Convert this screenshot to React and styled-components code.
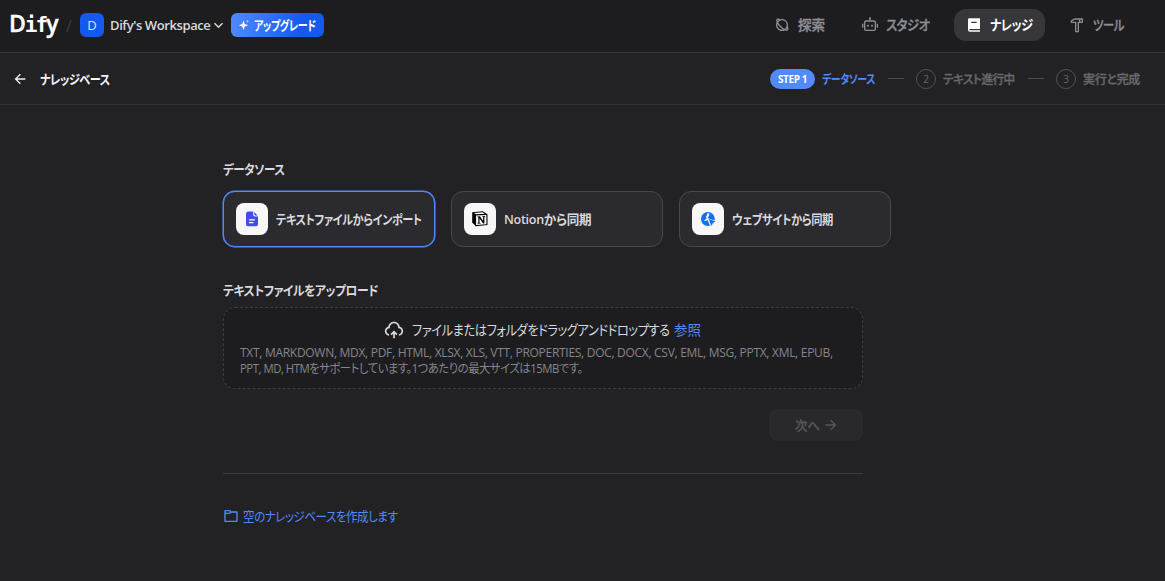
import React from 'react'
import styled, { createGlobalStyle } from 'styled-components'
import {
  RiArrowDownSLine,
  RiArrowLeftLine,
  RiArrowRightLine,
  RiBook2Fill,
  RiFolder6Line,
  RiHammerLine,
  RiPlanetLine,
  RiRobot2Line,
  RiUploadCloud2Line,
} from 'react-icons/ri'

const GlobalStyle = createGlobalStyle`
  * {
    box-sizing: border-box;
  }

  body {
    margin: 0;
    background: #222225;
    color: #d9d9de;
    font-family: "Open Sans", "Noto Sans CJK JP", sans-serif;
    font-size: 13px;
    font-feature-settings: "palt";
    overflow: hidden;
  }
`

const Page = styled.div`
  height: 100vh;
  display: flex;
  flex-direction: column;
`

/* $width is the laid out width, $squeeze condenses the kana inside it */
const LabelBox = styled.span`
  display: block;
  flex-shrink: 0;
  width: ${({ $width }) => ($width ? `${$width}px` : 'auto')};
  font-size: ${({ $size }) => $size || 13}px;
  font-weight: ${({ $weight }) => $weight || 500};
  letter-spacing: ${({ $track = -0.5 }) => $track}px;
  line-height: ${({ $line }) => $line || 20}px;
  text-align: left;
  white-space: nowrap;
  /* the CJK face has no medium, a thin stroke stands in for it */
  -webkit-text-stroke: ${({ $weight }) => ($weight ? 0 : 0.35)}px currentColor;
`

const LabelText = styled.span`
  display: inline-block;
  transform: scaleX(${({ $squeeze }) => $squeeze || 1});
  transform-origin: left center;
`

function Label({ children, $squeeze, ...rest }) {
  return (
    <LabelBox {...rest}>
      <LabelText $squeeze={$squeeze}>{children}</LabelText>
    </LabelBox>
  )
}

const Header = styled.header`
  height: 53px;
  flex-shrink: 0;
  display: flex;
  justify-content: space-between;
  align-items: flex-start;
  padding: 9px 29px 0 9px;
  background: #1d1d20;
  border-bottom: 1px solid #38383b;
`

const Brand = styled.div`
  height: 32px;
  display: flex;
  align-items: center;
`

const Logo = styled.div`
  width: 49px;
  height: 32px;
  color: #fff;
  font: 600 23px/28px "Open Sans", sans-serif;
  letter-spacing: -1px;
  white-space: nowrap;
  -webkit-text-stroke: 0.4px #fff;
`

const LogoMono = styled.span`
  font: 700 21px/28px "DejaVu Sans Mono", monospace;
  letter-spacing: -2px;
  -webkit-text-stroke: 0;
`

const Slash = styled.span`
  width: 22px;
  text-align: center;
  color: #47474b;
  font-size: 17px;
  font-weight: 300;
`

const Avatar = styled.div`
  width: 24px;
  height: 24px;
  border-radius: 6px;
  background: #155aef;
  color: #d5e2ff;
  font-size: 13px;
  line-height: 24px;
  text-align: center;
`

const Workspace = styled.button`
  display: flex;
  align-items: center;
  width: 115px;
  height: 24px;
  margin: 0 6px;
  padding: 0;
  border: 0;
  background: none;
  color: #d9d9de;
  font: inherit;

  svg {
    flex-shrink: 0;
    margin-left: auto;
    margin-right: -2px;
  }
`

const Upgrade = styled.button`
  display: flex;
  align-items: center;
  gap: 4px;
  width: 93px;
  height: 24px;
  padding: 0 0 0 7px;
  border: 0;
  border-radius: 6px;
  background: linear-gradient(95deg, #5289ff 0%, #155aef 75%);
  color: #fff;
  font: inherit;

  svg {
    flex-shrink: 0;
  }
`

const Nav = styled.nav`
  display: flex;
  gap: 12px;
`

const NavItem = styled.a`
  width: ${({ $width }) => $width}px;
  height: 32px;
  display: flex;
  align-items: center;
  gap: 8px;
  padding-left: 12px;
  border-radius: 12px;
  background: ${({ $active }) => ($active ? '#37373b' : 'transparent')};
  color: ${({ $active }) => ($active ? '#fff' : '#8d8d93')};

  svg {
    flex-shrink: 0;
  }
`

const SubHeader = styled.div`
  height: 52px;
  flex-shrink: 0;
  display: flex;
  align-items: center;
  justify-content: space-between;
  padding: 0 24px 0 12px;
  border-bottom: 1px solid #343437;
`

const Back = styled.a`
  display: flex;
  align-items: center;
  gap: 12px;
  color: #f4f4f6;
`

const Steps = styled.div`
  display: flex;
  align-items: center;
  color: #67676d;
`

const StepPill = styled.span`
  width: 45px;
  height: 20px;
  margin-right: 7px;
  border-radius: 10px;
  background: #5289ff;
  color: #fff;
  font-size: 10px;
  font-weight: 700;
  line-height: 20px;
  letter-spacing: -0.4px;
  text-align: center;
`

const StepNumber = styled.span`
  width: 20px;
  height: 20px;
  margin-right: 7px;
  border: 1px solid #515156;
  border-radius: 50%;
  font-size: 10px;
  line-height: 18px;
  text-align: center;
`

const StepLabel = styled.span`
  padding-top: 2px;
  color: ${({ $active }) => ($active ? '#5289ff' : 'inherit')};
`

const StepLine = styled.span`
  width: 16px;
  height: 1px;
  margin: 0 12px;
  background: #4b4b50;
`

const Main = styled.main`
  width: 668px;
  margin: 54px 0 0 223px;
`

const Heading = styled.h2`
  height: 20px;
  margin: 0;
  font: inherit;
`

const Sources = styled.div`
  display: flex;
  gap: 16px;
  margin-top: 12px;
`

const SourceCard = styled.button`
  width: 212px;
  height: 56px;
  display: flex;
  align-items: center;
  gap: 8px;
  padding: 0 12px;
  border: 1px solid ${({ $active }) => ($active ? '#5289ff' : '#48484c')};
  border-radius: 12px;
  box-shadow: ${({ $active }) => ($active ? '0 0 0 0.5px #5289ff' : 'none')};
  background: #2b2b2f;
  color: #d9d9de;
  font: inherit;
`

const SourceIcon = styled.span`
  width: 32px;
  height: 32px;
  flex-shrink: 0;
  display: flex;
  align-items: center;
  justify-content: center;
  border-radius: 8px;
  background: #f7f7f8;
`

const Uploader = styled.section`
  width: 640px;
  margin-top: 33px;
`

const DropZone = styled.div`
  height: 82px;
  margin-top: 7px;
  padding: 12px 16px;
  border: 1px dashed #3d3d41;
  border-radius: 12px;
  background: #1d1d20;
`

const DropTitle = styled.div`
  height: 20px;
  display: flex;
  align-items: center;
  justify-content: center;
  padding-right: 2px;

  svg {
    margin-right: 8px;
  }
`

const Browse = styled.a`
  margin-left: 4px;
  color: #5289ff;
`

const Hint = styled.div`
  margin-top: 5px;
  color: #85858c;
`

const Actions = styled.div`
  display: flex;
  justify-content: flex-end;
  padding: 20px 0 32px;
  border-bottom: 1px solid #3c3c3f;
`

const NextButton = styled.button`
  width: 94px;
  height: 32px;
  display: flex;
  align-items: center;
  justify-content: center;
  gap: 4px;
  padding: 0 0 0 2px;
  border: 0;
  border-radius: 8px;
  background: #29292c;
  color: #55555a;
  font: inherit;
`

const CreateEmpty = styled.a`
  display: flex;
  align-items: center;
  gap: 4px;
  margin-top: 32px;
  color: #5289ff;
`

function SparkleIcon() {
  return (
    <svg width="12" height="12" viewBox="0 0 12 12" fill="#fff">
      <path d="M5.500 1.500 6.700 5 10.200 6.300 6.700 7.600 5.500 11 4.300 7.600.8 6.300 4.300 5z" />
      <path d="M9.400 1v2.400M8.200 2.200h2.400" stroke="#fff" strokeWidth=".6" opacity=".7" />
    </svg>
  )
}

function FileIcon() {
  return (
    <svg width="14" height="16" viewBox="0 0 14 16">
      <path fill="#444ce7" d="M3.500.5h4.700v3.300c0 1 .6 1.700 1.700 1.700h3.100v7.400c0 1.500-1 2.400-2.400 2.400H3.400C1.900 15.300 1 14.400 1 12.900V2.900C1 1.400 1.900.5 3.500.5Z" />
      <path fill="#444ce7" d="M9.300 1l3.300 3.400h-2.500c-.5 0-.8-.3-.8-.8z" />
      <path stroke="#fff" strokeWidth="1.300" strokeLinecap="round" d="M4.500 8.800h5M4.500 11.700h3.400" />
    </svg>
  )
}

function NotionIcon() {
  return (
    <svg width="18" height="18" viewBox="0 0 18 18">
      <path fill="#000" d="M1.200 2.300 11.700 1.300 16.500 4.200V15.100L4.800 16.300 1.200 12.500z" />
      <path fill="#fff" d="M3 2.900 11.400 2.200 14 3.700 5.100 4.300zM5.100 5.500 15.400 4.900V14.200L5.100 14.900z" />
      <path fill="#000" d="M6.300 6.500 9 6.300 12.100 11V7l-1-.2v-.6l3.200-.2v.6l-.9.3v6.500l-1.400.1-3.500-5.300v4.500l1.200.2v.6l-3.200.2v-.6l.8-.3V7.200l-1-.1z" />
    </svg>
  )
}

function WebIcon() {
  return (
    <svg width="16" height="16" viewBox="0 0 16 16">
      <circle cx="7.900" cy="8" r="6.900" fill="#1570ef" />
      <path fill="#f7f7f8" d="M7.200 2.200 9.300 2.600 9 5.200 7.900 5.800 8.300 7.400 15.300 9.700 13.400 11.300 11 15.200 9.300 13.300 7.600 8.900 5 10.300 4.200 9.500 6.600 7.600 6 5.300 7 4.200z" />
      <path fill="#1570ef" d="m8.700 8 6.800 2.600-2.900 1.300-1.300 3z" />
    </svg>
  )
}

const navItems = [
  { text: '探索', icon: RiPlanetLine, width: 76, squeeze: 0.97, track: 0 },
  { text: 'スタジオ', icon: RiRobot2Line, width: 92, squeeze: 0.88 },
  { text: 'ナレッジ', icon: RiBook2Fill, width: 91, squeeze: 0.86, active: true },
  { text: 'ツール', icon: RiHammerLine, width: 79, squeeze: 0.81 },
]

const sources = [
  { text: 'テキストファイルからインポート', icon: FileIcon, squeeze: 0.86, active: true },
  { text: 'Notionから同期', icon: NotionIcon, squeeze: 0.965, track: -0.3 },
  { text: 'ウェブサイトから同期', icon: WebIcon, squeeze: 0.87 },
]

export default function App() {
  return (
    <Page>
      <GlobalStyle />
      <Header>
        <Brand>
          <Logo>D<LogoMono>if</LogoMono>y</Logo>
          <Slash>/</Slash>
          <Avatar>D</Avatar>
          <Workspace>
            <Label $weight={600} $track={-0.4}>Dify's Workspace</Label>
            <RiArrowDownSLine size={17} />
          </Workspace>
          <Upgrade>
            <SparkleIcon />
            <Label $width={62} $weight={700} $squeeze={0.77}>アップグレード</Label>
          </Upgrade>
        </Brand>
        <Nav>
          {navItems.map(({ text, icon: Icon, width, squeeze, track, active }) => (
            <NavItem key={text} $width={width} $active={active}>
              <Icon size={16} />
              <Label $size={14} $weight={active ? 700 : undefined} $squeeze={squeeze} $track={track} $width={width - 48}>
                {text}
              </Label>
            </NavItem>
          ))}
        </Nav>
      </Header>

      <SubHeader>
        <Back>
          <RiArrowLeftLine size={16} />
          <Label $weight={700} $squeeze={0.86}>ナレッジベース</Label>
        </Back>
        <Steps>
          <StepPill>STEP 1</StepPill>
          <StepLabel $active>
            <Label $width={54} $weight={700} $size={12} $squeeze={0.83}>データソース</Label>
          </StepLabel>
          <StepLine />
          <StepNumber>2</StepNumber>
          <StepLabel>
            <Label $width={73} $size={12} $squeeze={0.965}>テキスト進行中</Label>
          </StepLabel>
          <StepLine />
          <StepNumber>3</StepNumber>
          <StepLabel>
            <Label $width={58} $size={12} $track={-0.3}>実行と完成</Label>
          </StepLabel>
        </Steps>
      </SubHeader>

      <Main>
        <Heading><Label $weight={600} $squeeze={0.885}>データソース</Label></Heading>
        <Sources>
          {sources.map(({ text, icon: Icon, squeeze, track, active }) => (
            <SourceCard key={text} $active={active}>
              <SourceIcon><Icon /></SourceIcon>
              <Label $width={146} $weight={600} $squeeze={squeeze} $track={track}>{text}</Label>
            </SourceCard>
          ))}
        </Sources>

        <Uploader>
          <Heading><Label $weight={600} $squeeze={0.91}>テキストファイルをアップロード</Label></Heading>
          <DropZone>
            <DropTitle>
              <RiUploadCloud2Line size={20} />
              <Label $width={258} $size={14} $weight={400} $squeeze={0.875}>
                ファイルまたはフォルダをドラッグアンドドロップする
              </Label>
              <Browse>
                <Label $width={27} $size={14} $weight={400} $track={0} $squeeze={0.96}>参照</Label>
              </Browse>
            </DropTitle>
            <Hint>
              <Label $size={12} $line={16} $weight={400} $track={-0.29}>
                TXT, MARKDOWN, MDX, PDF, HTML, XLSX, XLS, VTT, PROPERTIES, DOC, DOCX, CSV, EML, MSG, PPTX, XML, EPUB,
              </Label>
              <Label $size={12} $line={16} $weight={400} $squeeze={0.945}>
                PPT, MD, HTMをサポートしています。1つあたりの最大サイズは15MBです。
              </Label>
            </Hint>
          </DropZone>
          <Actions>
            <NextButton disabled>
              <Label $width={24} $track={0} $squeeze={0.95}>次へ</Label>
              <RiArrowRightLine size={16} />
            </NextButton>
          </Actions>
          <CreateEmpty>
            <RiFolder6Line size={16} />
            <Label $weight={400} $squeeze={0.885}>空のナレッジベースを作成します</Label>
          </CreateEmpty>
        </Uploader>
      </Main>
    </Page>
  )
}
